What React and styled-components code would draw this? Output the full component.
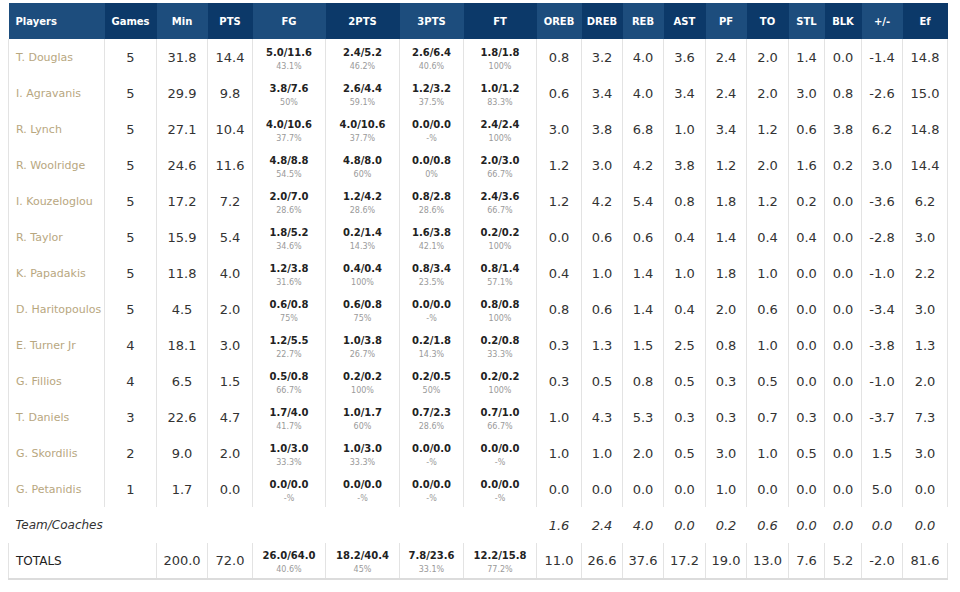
import styled, { createGlobalStyle } from "styled-components";

const GlobalStyle = createGlobalStyle`
  body {
    margin: 0;
    background: #fff;
    font-family: "DejaVu Sans", Verdana, sans-serif;
  }
`;

const Page = styled.div`
  padding: 3px 0 0 8px;
`;

const Table = styled.table`
  width: 939px;
  table-layout: fixed;
  border-collapse: collapse;
  color: #333;
`;

const HeadCell = styled.th`
  height: 36px;
  padding: 0;
  font-size: 10px;
  font-weight: bold;
  color: #fff;
  text-align: ${(p) => (p.$left ? "left" : "center")};
  padding-left: ${(p) => (p.$left ? "7px" : "0")};
  background: ${(p) => (p.$dark ? "#0c3969" : "#1d4d7d")};
`;

const Row = styled.tr`
  height: 36px;
`;

const Cell = styled.td`
  padding: 0;
  border-left: 1px solid #e3e3e3;
  border-right: 1px solid #e3e3e3;
  text-align: center;
  vertical-align: middle;
  font-size: 13px;
  white-space: nowrap;
`;

const SplitCell = styled(Cell)`
  padding-top: 4px;
`;

const NameCell = styled(Cell)`
  text-align: left;
  padding-left: 7px;
  font-size: 11px;
  color: #b8a77f;
`;

const Frac = styled.div`
  font-size: 10px;
  font-weight: bold;
  line-height: 13px;
  color: #222;
`;

const Pct = styled.div`
  font-size: 8px;
  line-height: 12px;
  margin-top: 2px;
  color: #9a9a9a;
`;

const TeamCell = styled.td`
  padding: 0;
  text-align: ${(p) => (p.$left ? "left" : "center")};
  padding-left: ${(p) => (p.$left ? "7px" : "0")};
  font-size: ${(p) => (p.$left ? "12px" : "13px")};
  font-style: italic;
  color: #333;
`;

const TotalsRow = styled.tr`
  height: 36px;
  border-bottom: 2px solid #dcdcdc;
`;

const TotalsLabel = styled(Cell)`
  text-align: left;
  padding-left: 7px;
  font-size: 12px;
  color: #222;
`;

const widths = [96, 52, 51, 45, 73, 74, 64, 73, 45, 41, 41, 42, 41, 42, 36, 37, 41, 45];
const heads = ["Players", "Games", "Min", "PTS", "FG", "2PTS", "3PTS", "FT", "OREB", "DREB", "REB", "AST", "PF", "TO", "STL", "BLK", "+/-", "Ef"];

const players = [
  ["T. Douglas", "5", "31.8", "14.4", ["5.0/11.6", "43.1%"], ["2.4/5.2", "46.2%"], ["2.6/6.4", "40.6%"], ["1.8/1.8", "100%"], "0.8 3.2 4.0 3.6 2.4 2.0 1.4 0.0 -1.4 14.8"],
  ["I. Agravanis", "5", "29.9", "9.8", ["3.8/7.6", "50%"], ["2.6/4.4", "59.1%"], ["1.2/3.2", "37.5%"], ["1.0/1.2", "83.3%"], "0.6 3.4 4.0 3.4 2.4 2.0 3.0 0.8 -2.6 15.0"],
  ["R. Lynch", "5", "27.1", "10.4", ["4.0/10.6", "37.7%"], ["4.0/10.6", "37.7%"], ["0.0/0.0", "-%"], ["2.4/2.4", "100%"], "3.0 3.8 6.8 1.0 3.4 1.2 0.6 3.8 6.2 14.8"],
  ["R. Woolridge", "5", "24.6", "11.6", ["4.8/8.8", "54.5%"], ["4.8/8.0", "60%"], ["0.0/0.8", "0%"], ["2.0/3.0", "66.7%"], "1.2 3.0 4.2 3.8 1.2 2.0 1.6 0.2 3.0 14.4"],
  ["I. Kouzeloglou", "5", "17.2", "7.2", ["2.0/7.0", "28.6%"], ["1.2/4.2", "28.6%"], ["0.8/2.8", "28.6%"], ["2.4/3.6", "66.7%"], "1.2 4.2 5.4 0.8 1.8 1.2 0.2 0.0 -3.6 6.2"],
  ["R. Taylor", "5", "15.9", "5.4", ["1.8/5.2", "34.6%"], ["0.2/1.4", "14.3%"], ["1.6/3.8", "42.1%"], ["0.2/0.2", "100%"], "0.0 0.6 0.6 0.4 1.4 0.4 0.4 0.0 -2.8 3.0"],
  ["K. Papadakis", "5", "11.8", "4.0", ["1.2/3.8", "31.6%"], ["0.4/0.4", "100%"], ["0.8/3.4", "23.5%"], ["0.8/1.4", "57.1%"], "0.4 1.0 1.4 1.0 1.8 1.0 0.0 0.0 -1.0 2.2"],
  ["D. Haritopoulos", "5", "4.5", "2.0", ["0.6/0.8", "75%"], ["0.6/0.8", "75%"], ["0.0/0.0", "-%"], ["0.8/0.8", "100%"], "0.8 0.6 1.4 0.4 2.0 0.6 0.0 0.0 -3.4 3.0"],
  ["E. Turner Jr", "4", "18.1", "3.0", ["1.2/5.5", "22.7%"], ["1.0/3.8", "26.7%"], ["0.2/1.8", "14.3%"], ["0.2/0.8", "33.3%"], "0.3 1.3 1.5 2.5 0.8 1.0 0.0 0.0 -3.8 1.3"],
  ["G. Fillios", "4", "6.5", "1.5", ["0.5/0.8", "66.7%"], ["0.2/0.2", "100%"], ["0.2/0.5", "50%"], ["0.2/0.2", "100%"], "0.3 0.5 0.8 0.5 0.3 0.5 0.0 0.0 -1.0 2.0"],
  ["T. Daniels", "3", "22.6", "4.7", ["1.7/4.0", "41.7%"], ["1.0/1.7", "60%"], ["0.7/2.3", "28.6%"], ["0.7/1.0", "66.7%"], "1.0 4.3 5.3 0.3 0.3 0.7 0.3 0.0 -3.7 7.3"],
  ["G. Skordilis", "2", "9.0", "2.0", ["1.0/3.0", "33.3%"], ["1.0/3.0", "33.3%"], ["0.0/0.0", "-%"], ["0.0/0.0", "-%"], "1.0 1.0 2.0 0.5 3.0 1.0 0.5 0.0 1.5 3.0"],
  ["G. Petanidis", "1", "1.7", "0.0", ["0.0/0.0", "-%"], ["0.0/0.0", "-%"], ["0.0/0.0", "-%"], ["0.0/0.0", "-%"], "0.0 0.0 0.0 0.0 1.0 0.0 0.0 0.0 5.0 0.0"],
];

const teamStats = "1.6 2.4 4.0 0.0 0.2 0.6 0.0 0.0 0.0 0.0".split(" ");
const totals = {
  min: "200.0",
  pts: "72.0",
  shots: [["26.0/64.0", "40.6%"], ["18.2/40.4", "45%"], ["7.8/23.6", "33.1%"], ["12.2/15.8", "77.2%"]],
  rest: "11.0 26.6 37.6 17.2 19.0 13.0 7.6 5.2 -2.0 81.6".split(" "),
};

function Split({ v }) {
  return (
    <SplitCell>
      <Frac>{v[0]}</Frac>
      <Pct>{v[1]}</Pct>
    </SplitCell>
  );
}

export default function App() {
  return (
    <Page>
      <GlobalStyle />
      <Table>
        <colgroup>
          {widths.map((w, i) => (
            <col key={i} style={{ width: w }} />
          ))}
        </colgroup>
        <thead>
          <tr>
            {heads.map((h, i) => (
              <HeadCell key={h} $left={i === 0} $dark={i % 2 === 1}>
                {h}
              </HeadCell>
            ))}
          </tr>
        </thead>
        <tbody>
          {players.map((p) => (
            <Row key={p[0]}>
              <NameCell>{p[0]}</NameCell>
              <Cell>{p[1]}</Cell>
              <Cell>{p[2]}</Cell>
              <Cell>{p[3]}</Cell>
              {[p[4], p[5], p[6], p[7]].map((s, i) => (
                <Split key={i} v={s} />
              ))}
              {p[8].split(" ").map((n, i) => (
                <Cell key={i}>{n}</Cell>
              ))}
            </Row>
          ))}
          <Row>
            <TeamCell $left colSpan={8}>Team/Coaches</TeamCell>
            {teamStats.map((n, i) => (
              <TeamCell key={i}>{n}</TeamCell>
            ))}
          </Row>
          <TotalsRow>
            <TotalsLabel colSpan={2}>TOTALS</TotalsLabel>
            <Cell>{totals.min}</Cell>
            <Cell>{totals.pts}</Cell>
            {totals.shots.map((s, i) => (
              <Split key={i} v={s} />
            ))}
            {totals.rest.map((n, i) => (
              <Cell key={i}>{n}</Cell>
            ))}
          </TotalsRow>
        </tbody>
      </Table>
    </Page>
  );
}
